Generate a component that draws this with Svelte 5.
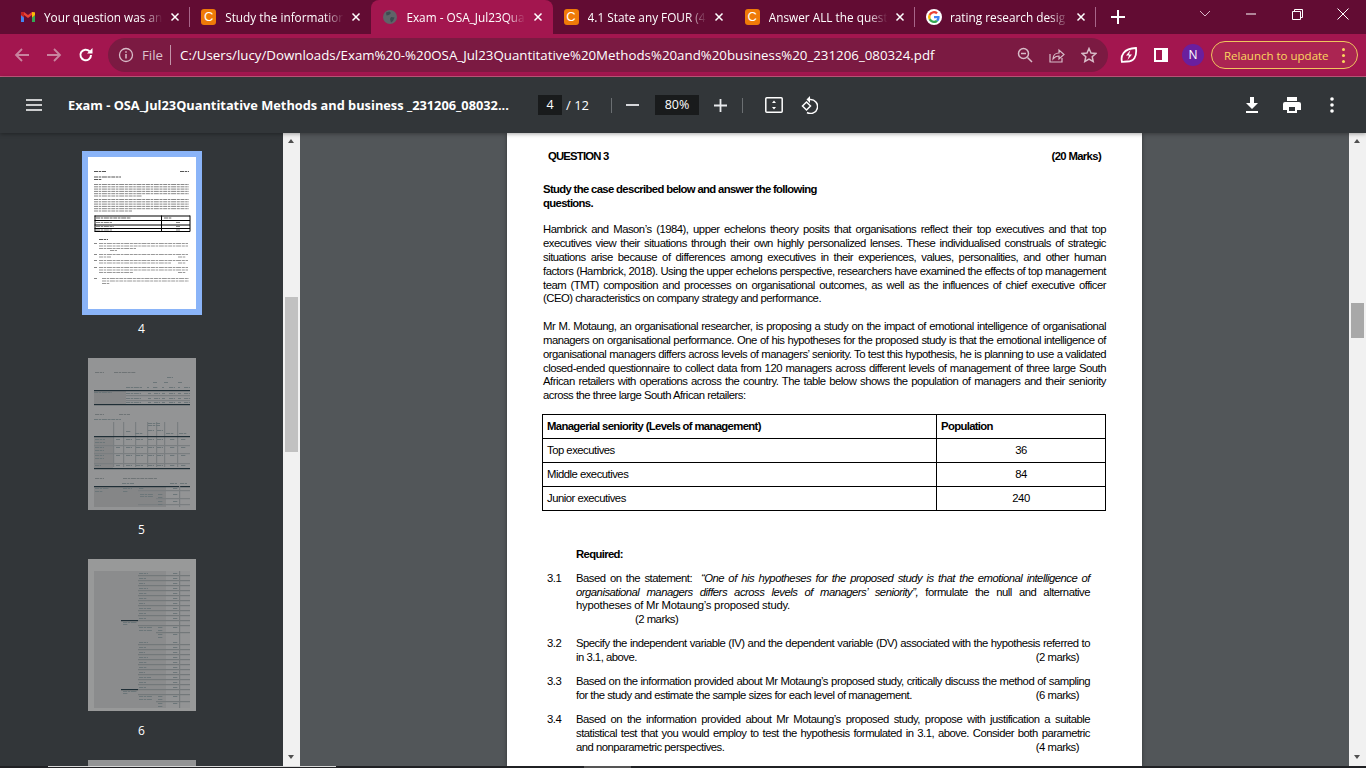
<script>
  const tabs = [
    { t: 'Your question was an', f: 'm' },
    { t: 'Study the information', f: 'c' },
    { t: 'Exam - OSA_Jul23Qua', f: 'g', active: true },
    { t: '4.1 State any FOUR (4', f: 'c' },
    { t: 'Answer ALL the quest', f: 'c' },
    { t: 'rating research desig', f: 'o' }
  ];
  const p1 = [
    'Hambrick and Mason’s (1984), upper echelons theory posits that organisations reflect their top executives and that top',
    'executives view their situations through their own highly personalized lenses. These individualised construals of strategic',
    'situations arise because of differences among executives in their experiences, values, personalities, and other human',
    'factors (Hambrick, 2018). Using the upper echelons perspective, researchers have examined the effects of top management',
    'team (TMT) composition and processes on organisational outcomes, as well as the influences of chief executive officer'
  ];
  const p2 = [
    'Mr M. Motaung, an organisational researcher, is proposing a study on the impact of emotional intelligence of organisational',
    'managers on organisational performance. One of his hypotheses for the proposed study is that the emotional intelligence of',
    'organisational managers differs across levels of managers’ seniority. To test this hypothesis, he is planning to use a validated',
    'closed-ended questionnaire to collect data from 120 managers across different levels of management of three large South',
    'African retailers with operations across the country. The table below shows the population of managers and their seniority'
  ];
  const rows = [['Top executives', '36'], ['Middle executives', '84'], ['Junior executives', '240']];

  // thumbnail marks: [x, y, width, height, colour]; 1px grey marks are drawn as broken "word" lines
  const T = '#555';
  const thumb4 = [
    [6,14,12,1,T],[92,14,9,1,T],[6,19.5,27,1,T],[6,22,8,1,T],
    ...[27,29.3,31.6,33.9,36.2].map(y=>[6,y,95,1,'#888']),[6,38.5,48,1,'#888'],
    ...[42,44.3,46.6,48.9,51.2].map(y=>[6,y,95,1,'#888']),[6,53.5,38,1,'#888'],
    [6.5,58.5,95.5,1,'#000'],[6.5,63,95.5,1,'#000'],[6.5,67.5,95.5,1,'#000'],[6.5,71,95.5,1,'#000'],[6.5,74,95.5,1,'#000'],
    [6.5,58.5,1,16,'#000'],[73,58.5,1,16,'#000'],[101.5,58.5,1,16,'#000'],
    [8,60.5,35,1,'#666'],[76,60.5,8,1,'#666'],[8,65,16,1,'#888'],[8,69,18,1,'#888'],[8,72.5,16,1,'#888'],[88,65,4,1,'#888'],[88,69,4,1,'#888'],[88,72.5,4,1,'#888'],
    [11,82,9,1,T],
    [6,86,3,1,'#888'],[11,86,89,1,'#999'],[11,88.5,89,1,'#999'],[11,91,37,1,'#999'],[22,93,7,1,'#999'],
    [6,97,3,1,'#888'],[11,97,89,1,'#999'],[11,99.5,12,1,'#999'],[90,99.5,8,1,'#999'],
    [6,103,3,1,'#888'],[11,103,89,1,'#999'],[11,105.5,72,1,'#999'],[90,105.5,8,1,'#999'],
    [6,110,3,1,'#888'],[11,110,89,1,'#999'],[11,112.5,89,1,'#999'],[11,115,34,1,'#999'],[90,115,8,1,'#999'],
    [6,121,3,1,'#888'],[14,121,87,1,'#999'],[14,123.5,87,1,'#999'],[14,126,8,1,'#999']
  ];
  const D = '#1f2e36', L = '#6f7476', G = '#6c7679', B = '#7a7e80';
  const thumb5 = [
    [7,14,9,1,L],[26,14,22,1,L],[79,19,6,1,G],[65,24,4,1,G],[76,24,4,1,G],[90,24,4,1,G],
    [38,29,16,1,G],[59,29,2,1,G],[65,29,5,1,G],[74,29,2,1,G],[81,29,6,1,G],[90,29,2,1,G],[96,29,6,1,G],
    [6,33,32,13,'#858687'],[6,32,96,1.2,D],[6,46,96,1.2,D],
    [38,37,64,1.2,B],[38,42,64,1.2,B],[6,34,18,1,G],
    [38,35,15,1,G],[60,35,3,1,G],[66,35,6,1,G],[74,35,3,1,G],[81,35,6,1,G],[90,35,3,1,G],[96,35,6,1,G],
    [38,40,15,1,G],[60,40,3,1,G],[66,40,6,1,G],[74,40,3,1,G],[81,40,6,1,G],[90,40,3,1,G],[96,40,6,1,G],
    [38,44,15,1,G],[60,44,3,1,G],[66,44,6,1,G],[74,44,3,1,G],[81,44,6,1,G],[90,44,3,1,G],[96,44,6,1,G],
    [7,56,9,1,L],[31,56,11,1,L],[6,61,27,1,G],
    ...[25,35,47,59,68,76,89].map(x=>[x,64,1.2,45,B]),
    [6,79,19,31,'#858687'],[6,78,96,1.2,D],[6,110,96,1.2,D],[6,87,96,1.2,B],[6,95,96,1.2,B],[6,105,96,1.2,B],
    [60,65,12,1,G],[60,67,12,1,G],[38,73,5,1,G],[47,75,8,1,G],[60,72,6,1,G],[69,72,6,1,G],[78,75,8,1,G],[91,75,8,1,G],
    [7,81,10,1,G],[7,84,10,1,G],[28,81,4,1,G],[38,81,6,1,G],[48,81,7,1,G],[60,81,6,1,G],[69,81,6,1,G],[82,81,5,1,G],[93,81,5,1,G],
    [7,89,9,1,G],[7,92,9,1,G],[28,89,4,1,G],[38,89,6,1,G],[48,89,7,1,G],[60,89,6,1,G],[69,89,6,1,G],[82,89,5,1,G],[93,89,5,1,G],
    [7,97,9,1,G],[7,100,9,1,G],[28,97,4,1,G],[38,97,6,1,G],[48,97,7,1,G],[60,97,6,1,G],[69,97,6,1,G],[82,97,5,1,G],[93,97,5,1,G],
    [7,107,6,1,G],[28,107,4,1,G],[38,107,6,1,G],[48,107,7,1,G],[60,107,6,1,G],[69,107,6,1,G],[82,107,5,1,G],[93,107,5,1,G],
    [7,120,9,1,L],[35,120,34,1,L],[34,125,12,1,G],[82,125,7,1,G],[92,125,7,1,G],
    [6,129,72,20,'#858687'],[6,128,96,1.2,D],[7,130,14,1,G],[7,133,8,1,G],[35,130,9,1,G],[35,133,5,1,G],[51,130,5,1,G],[85,130,5,1,G],
    [50,132,52,1.2,B],[50,146,52,1.2,B],[68,140,34,1.2,B],[52,136,13,1,G],[52,138,13,1,G],[70,136,5,1,G],[70,139,5,1,G],[70,143,5,1,G],[70,146,5,1,G],[85,136,5,1,G],[85,143,5,1,G],
    [91,128,1.2,21,B]
  ];
  const rowsY = [16,21,26,31,36,41,46,51,56,61];
  const lab = [9,7,6,9,8,8,6,12,7,7];
  const thumb6 = [
    [0,0,108,152,'#989999'],[6,12,72,137,'#8b8c8d'],[78,12,24,137,'#939495'],
    ...[0,69].flatMap(o => rowsY.map((y)=>[50,y+o,52,1.2,'#73787a'])),
    ...[0,69].flatMap(o => rowsY.map((y,i)=>[51,y+o-2,lab[i],1,G])),
    ...[0,69].flatMap(o => rowsY.map((y)=>[85,y+o-2,5,1,G])),
    [91,12,1.2,137,'#787c7e'],
    [33,61,17,1.2,D],[33,130,17,1.2,D],[35,63,14,1,G],[35,65,5,1,G],[35,132,14,1,G],[35,134,5,1,G],
    [50,66,52,1.2,'#73787a'],[68,73,34,1.2,'#73787a'],[50,135,52,1.2,'#73787a'],[68,142,34,1.2,'#73787a'],
    [51,68,13,1,G],[51,71,13,1,G],[70,68,5,1,G],[70,71,5,1,G],[70,75,5,1,G],[70,78,5,1,G],[85,68,5,1,G],[85,75,5,1,G],
    [51,137,13,1,G],[51,140,13,1,G],[70,137,5,1,G],[70,140,5,1,G],[70,144,5,1,G],[70,147,5,1,G],[85,137,5,1,G],[85,144,5,1,G]
  ];
  const thumbs = [
    { n: 4, marks: thumb4, sel: true },
    { n: 5, marks: thumb5 },
    { n: 6, marks: thumb6 },
    { marks: [] }
  ];
  const isWord = (m) => m[3] === 1 && m[4] !== '#000';
</script>

<div class="app">
  <div class="tabstrip">
    {#each tabs as tab}
      <div class="tab" class:active={tab.active}>
        <span class="fav">
          {#if tab.f === 'm'}
            <svg viewBox="0 0 16 16" width="16" height="16"><path d="M1 4v9h3V7z" fill="#4285f4"/><path d="M15 4v9h-3V7z" fill="#34a853"/><path d="M1 3.5 4 3l4 3 4-3 3 .5V6l-3 2.5V6L8 9 4 6v2.5L1 6z" fill="#ea4335"/><path d="M12 3l3 .5V6l-3 2.5z" fill="#fbbc04"/><path d="M1 3.5 4 3v5.5L1 6z" fill="#c5221f"/></svg>
          {:else if tab.f === 'c'}
            <span class="chegg">C</span>
          {:else if tab.f === 'g'}
            <svg viewBox="0 0 16 16" width="16" height="16"><circle cx="8" cy="8" r="7" fill="#5f6368"/><path d="M4 3.5 7.5 2.5 9 4 7 6 4.5 6.5zM9 8l3.5.5L11 12l-2 1.5L8 10z" fill="#3c4a50"/></svg>
          {:else}
            <svg viewBox="0 0 16 16" width="16" height="16"><circle cx="8" cy="8" r="8" fill="#fff"/><path d="M13.6 8.2c0-.4 0-.8-.1-1.2H8v2.3h3.2c-.1.7-.6 1.4-1.2 1.8l1.9 1.4c1.1-1 1.7-2.5 1.7-4.3z" fill="#4285f4"/><path d="M8 14c1.6 0 2.9-.5 3.9-1.5L10 11.1c-.5.4-1.2.6-2 .6-1.5 0-2.9-1-3.3-2.4l-2 1.5C3.700 12.700 5.700 14 8 14z" fill="#34a853"/><path d="M4.700 9.300a3.700 3.700 0 0 1 0-2.600l-2-1.500a6 6 0 0 0 0 5.600z" fill="#fbbc04"/><path d="M8 4.300c.9 0 1.600.3 2.200.9l1.700-1.700A6 6 0 0 0 2.700 5.200l2 1.500C5.100 5.300 6.500 4.300 8 4.300z" fill="#ea4335"/></svg>
          {/if}
        </span>
        <span class="ttl">{tab.t}</span>
        <svg class="cls" viewBox="0 0 10 10" width="10" height="10"><path d="M1.500 1.500l7 7M8.500 1.500l-7 7" stroke="#fff" stroke-width="1.500"/></svg>
      </div>
    {/each}
    <svg class="plus" viewBox="0 0 14 14" width="14" height="14"><path d="M7 0v14M0 7h14" stroke="#fff" stroke-width="2"/></svg>
    <div class="winctl">
      <span><svg viewBox="0 0 12 8" width="12" height="8"><path d="M1 1l5 5 5-5" fill="none" stroke="#d9b8c8" stroke-width="1"/></svg></span>
      <span><svg viewBox="0 0 10 2" width="10" height="2"><path d="M0 1h10" stroke="#fff" stroke-width="1"/></svg></span>
      <span><svg viewBox="0 0 11 11" width="11" height="11"><path d="M.5 2.500h8v8h-8zM2.500 2.500v-2h8v8h-2" fill="none" stroke="#fff" stroke-width="1"/></svg></span>
      <span><svg viewBox="0 0 12 12" width="12" height="12"><path d="M.5.500l11 11M11.500.500l-11 11" stroke="#fff" stroke-width="1"/></svg></span>
    </div>
  </div>

  <div class="toolbar">
    <span class="btn"><svg viewBox="0 0 16 16" width="16" height="16"><path d="M15 8H2M8 2 2 8l6 6" fill="none" stroke="#c9849f" stroke-width="1.800"/></svg></span>
    <span class="btn"><svg viewBox="0 0 16 16" width="16" height="16"><path d="M1 8h13M8 2l6 6-6 6" fill="none" stroke="#c9849f" stroke-width="1.800"/></svg></span>
    <span class="btn"><svg viewBox="0 0 16 16" width="16" height="16"><path d="M13 8a5.300 5.300 0 1 1-1.500-3.700" fill="none" stroke="#fff" stroke-width="2"/><path d="M14.500 1v5.500H9z" fill="#fff"/></svg></span>
    <div class="omni">
      <svg class="info" viewBox="0 0 16 16" width="16" height="16"><circle cx="8" cy="8" r="6.500" fill="none" stroke="#d8bcc8" stroke-width="1.300"/><path d="M8 7v4.500M8 4.300v1.500" stroke="#d8bcc8" stroke-width="1.500"/></svg>
      <span class="file">File</span>
      <span class="osep"></span>
      <span class="url">C:/Users/lucy/Downloads/Exam%20-%20OSA_Jul23Quantitative%20Methods%20and%20business%20_231206_080324.pdf</span>
      <span class="btn"><svg viewBox="0 0 16 16" width="16" height="16"><circle cx="6.500" cy="6.500" r="5" fill="none" stroke="#d8bcc8" stroke-width="1.500"/><path d="M10.500 10.500 15 15M4 6.500h5" stroke="#d8bcc8" stroke-width="1.500"/></svg></span>
      <span class="btn"><svg viewBox="0 0 16 16" width="16" height="16"><path d="M1 7v8h12v-4" fill="none" stroke="#d8bcc8" stroke-width="1.200"/><path d="M4 12c0-4 3-6 6-6V3l5 4.500-5 4.500V9c-2.500 0-4.500 1-6 3z" fill="none" stroke="#d8bcc8" stroke-width="1.200"/></svg></span>
      <span class="btn"><svg viewBox="0 0 16 16" width="16" height="16"><path d="M8 1.500l2 4.500 4.800.5-3.600 3.200 1 4.800L8 12l-4.200 2.500 1-4.800L1.200 6.500 6 6z" fill="none" stroke="#d8bcc8" stroke-width="1.500"/></svg></span>
    </div>
    <span class="btn leaf"><svg viewBox="0 0 18 18" width="18" height="18"><path d="M2 16c-1.500-6 1-13.500 14-14 1 8.500-2 13.500-9 13.500-2 0-3 0-5 .5z" fill="none" stroke="#fff" stroke-width="1.800"/><path d="M10.500 4 6 9.500h3L7.500 14 12 8.500H9z" fill="#fff"/></svg></span>
    <span class="btn"><span class="panel"><span></span></span></span>
    <span class="btn"><span class="avatar">N</span></span>
    <div class="relaunch"><span>Relaunch to update</span><i></i></div>
  </div>

  <div class="pdfbar">
    <svg class="ham" viewBox="0 0 16 12" width="16" height="12"><path d="M0 1h16M0 6h16M0 11h16" stroke="#fff" stroke-width="1.700"/></svg>
    <span class="doc">Exam - OSA_Jul23Quantitative Methods and business _231206_08032...</span>
    <span class="pbox">4</span>
    <span class="pcount">/ 12</span>
    <span class="psep s1"></span>
    <svg class="minus" viewBox="0 0 13 2" width="13" height="2"><path d="M0 1h13" stroke="#e8eaed" stroke-width="1.800"/></svg>
    <span class="zbox">80%</span>
    <svg class="zplus" viewBox="0 0 13 13" width="13" height="13"><path d="M6.500 0v13M0 6.500h13" stroke="#e8eaed" stroke-width="1.800"/></svg>
    <span class="psep s2"></span>
    <svg class="fit" viewBox="0 0 18 16" width="18" height="16"><rect x=".8" y=".8" width="16.400" height="14.400" rx="1" fill="none" stroke="#fff" stroke-width="1.500"/><path d="M9 3.500l2 2.500H7zM9 12.500 7 10h4z" fill="#fff"/></svg>
    <svg class="rot" viewBox="0 0 18 18" width="18" height="18"><path d="M10 3.500a7 7 0 1 1-3 13" fill="none" stroke="#fff" stroke-width="1.500"/><path d="M10 0v7L6.500 3.500z" fill="#fff"/><path d="M6.500 6l4 4-4 4-4-4z" fill="none" stroke="#fff" stroke-width="1.500"/></svg>
    <span class="pright">
      <span class="pb"><svg viewBox="0 0 14 16" width="14" height="16"><path d="M5 0h4v6h4L7 12 1 6h4zM1 14h12v2H1z" fill="#fff"/></svg></span>
      <span class="pb"><svg viewBox="0 0 18 16" width="18" height="16"><path d="M4 0h10v4H4zM2 5h14a2 2 0 0 1 2 2v6h-4v3H4v-3H0V7a2 2 0 0 1 2-2zM6 10v4h6v-4z" fill="#fff"/></svg></span>
      <span class="pb"><svg viewBox="0 0 4 16" width="4" height="16"><circle cx="2" cy="2" r="1.800" fill="#fff"/><circle cx="2" cy="8" r="1.800" fill="#fff"/><circle cx="2" cy="14" r="1.800" fill="#fff"/></svg></span>
    </span>
  </div>

  <div class="main">
    <aside class="side">
      {#each thumbs as th}
        <div class="titem">
          <div class="thumb" class:sel={th.sel}>
            <svg viewBox="0 0 108 152" width="108" height="152">
              {#each th.marks as m}
                {#if isWord(m)}
                  <line x1={m[0]} x2={m[0] + m[2]} y1={m[1] + .5} y2={m[1] + .5} stroke={m[4]} stroke-width="1" stroke-dasharray="4 .7 2.500 .7 5 .7 3 .7" />
                {:else}
                  <rect x={m[0]} y={m[1]} width={m[2]} height={m[3]} fill={m[4]} />
                {/if}
              {/each}
            </svg>
          </div>
          {#if th.n}<div class="tnum">{th.n}</div>{/if}
        </div>
      {/each}
    </aside>
    <div class="sb left"><i class="up"></i><b></b><i class="down"></i></div>
    <div class="viewer">
      <div class="page">
        <div class="qhead"><span class="q">QUESTION 3</span><span>(20 Marks)</span></div>
        <div class="study"><div>Study the case described below and answer the following</div><div>questions.</div></div>
        <div class="para">
          {#each p1 as l}<div class="j">{l}</div>{/each}
          <div>(CEO) characteristics on company strategy and performance.</div>
        </div>
        <div class="para p2">
          {#each p2 as l}<div class="j">{l}</div>{/each}
          <div>across the three large South African retailers:</div>
        </div>
        <table>
          <tbody>
            <tr class="hd"><td>Managerial seniority (Levels of management)</td><td>Population</td></tr>
            {#each rows as r}<tr><td>{r[0]}</td><td class="c">{r[1]}</td></tr>{/each}
          </tbody>
        </table>
        <div class="req">Required:</div>
        <div class="item i1">
          <span class="n">3.1</span>
          <div class="ls">
            <div class="j">Based on the statement:&nbsp; <em>“One of his hypotheses for the proposed study is that the emotional intelligence of</em></div>
            <div class="j"><em>organisational managers differs across levels of managers’ seniority”,</em> formulate the null and alternative</div>
            <div class="wide">hypotheses of Mr Motaung’s proposed study.</div>
            <div class="m2">(2 marks)</div>
          </div>
        </div>
        <div class="item">
          <span class="n">3.2</span>
          <div class="ls">
            <div class="j">Specify the independent variable (IV) and the dependent variable (DV) associated with the hypothesis referred to</div>
            <div class="mk"><span>in 3.1, above.</span><span>(2 marks)</span></div>
          </div>
        </div>
        <div class="item">
          <span class="n">3.3</span>
          <div class="ls">
            <div class="j">Based on the information provided about Mr Motaung’s proposed study, critically discuss the method of sampling</div>
            <div class="mk"><span>for the study and estimate the sample sizes for each level of management.</span><span>(6 marks)</span></div>
          </div>
        </div>
        <div class="item">
          <span class="n">3.4</span>
          <div class="ls">
            <div class="j">Based on the information provided about Mr Motaung’s proposed study, propose with justification a suitable</div>
            <div class="j">statistical test that you would employ to test the hypothesis formulated in 3.1, above. Consider both parametric</div>
            <div class="mk"><span>and nonparametric perspectives.</span><span>(4 marks)</span></div>
          </div>
        </div>
      </div>
    </div>
    <div class="sb right"><i class="up"></i><b></b><i class="down"></i></div>
  </div>
  <div class="bottom"><span class="seg1"></span><span class="seg2"></span></div>
</div>

<style>
  :global(body) { margin: 0; background: #323639; }
  .app { width: 1366px; height: 768px; display: flex; flex-direction: column; overflow: hidden; font-family: "Open Sans", "Noto Sans", sans-serif; color: #fff; }

  .tabstrip { height: 34px; flex: none; background: #620c33; display: flex; align-items: stretch; padding-left: 9px; }
  .tab { width: 181.2px; box-sizing: border-box; display: flex; align-items: center; padding-left: 11px; padding-right: 10px; position: relative; font-size: 11.800px; }
  .tab::after { content: ""; position: absolute; right: 0; top: 7px; height: 20px; width: 1px; background: #a8668a; }
  .tab:nth-child(2)::after, .tab:nth-child(3)::after, .tab:nth-child(4)::after { display: none; }
  .tab.active { background: #a3164f; border-radius: 8px 8px 0 0; }
  .fav { width: 16px; height: 16px; flex: none; display: flex; }
  .chegg { width: 15px; height: 16px; border-radius: 3px; background: #ef7a08; color: #fff; font: 13px/16px "Liberation Sans", sans-serif; text-align: center; }
  .ttl { flex: 1; min-width: 0; margin-left: 8px; white-space: nowrap; overflow: hidden; -webkit-mask-image: linear-gradient(90deg, #000 82%, transparent 98%); mask-image: linear-gradient(90deg, #000 82%, transparent 98%); }
  .cls { flex: none; margin-left: 5px; }
  .plus { align-self: center; margin-left: 15px; }
  .winctl { margin-left: auto; display: flex; align-items: center; margin-top: -6px; }
  .winctl span { width: 46px; display: flex; justify-content: center; }

  .toolbar { height: 42px; flex: none; background: #a3164f; border-bottom: 1px solid #c85a80; display: flex; align-items: center; padding-left: 6px; }
  .btn { width: 32px; height: 32px; flex: none; display: flex; align-items: center; justify-content: center; }
  .omni { width: 1000px; height: 34px; box-sizing: border-box; margin-left: 6px; background: #7b1a42; border-radius: 17px; display: flex; align-items: center; padding: 0 3px 0 10px; font-size: 13.300px; }
  .file { margin-left: 8px; color: #dcc3ce; }
  .osep { width: 1px; height: 20px; background: #c295a9; margin: 0 9px 0 7px; }
  .url { flex: 1; white-space: nowrap; overflow: hidden; }
  .leaf { margin-left: 5px; }
  .panel { width: 14px; height: 14px; background: #fff; display: flex; justify-content: flex-start; box-sizing: border-box; padding: 2px; }
  .panel span { width: 6px; background: #a3164f; }
  .avatar { width: 22px; height: 22px; border-radius: 50%; background: #6a1f9e; font-size: 12px; line-height: 22px; text-align: center; }
  .relaunch { margin-left: 2px; width: 147px; height: 28px; box-sizing: border-box; border: 1px solid #f0c75e; border-radius: 14px; background: #ab2552; color: #fbd75f; font-size: 11.500px; display: flex; align-items: center; padding-left: 12px; position: relative; white-space: nowrap; }
  .relaunch i { position: absolute; right: 12px; top: 6px; width: 3px; height: 3px; border-radius: 50%; background: #fbd75f; box-shadow: 0 6px 0 #fbd75f, 0 12px 0 #fbd75f; }

  .pdfbar { height: 56px; flex: none; background: #323639; display: flex; align-items: center; position: relative; z-index: 2; box-shadow: 0 1px 4px rgba(0,0,0,.35); font-size: 12.800px; }
  .ham { margin-left: 26px; }
  .doc { margin-left: 26px; width: 445px; white-space: nowrap; font-weight: 700; }
  .pbox, .zbox { background: #191b1c; height: 20px; line-height: 20px; text-align: center; font-size: 12.500px; }
  .pbox { margin-left: 25px; width: 24px; }
  .pcount { margin-left: 4px; width: 45px; font-size: 13px; }
  .psep { width: 1px; height: 15px; background: #6b6f72; }
  .minus { margin-left: 14px; }
  .zbox { margin-left: 16px; width: 44px; }
  .zplus { margin-left: 15px; }
  .s2 { margin-left: 15px; }
  .fit { margin-left: 22px; }
  .rot { margin-left: 17px; }
  .pright { margin-left: auto; padding-right: 14px; display: flex; }
  .pb { width: 40px; height: 40px; display: flex; align-items: center; justify-content: center; }

  .main { flex: 1; min-height: 0; display: flex; overflow: hidden; }
  .side { width: 283px; flex: none; background: #323639; overflow: hidden; padding-top: 24px; box-sizing: border-box; }
  .titem { height: 201px; }
  .thumb { width: 108px; height: 152px; margin: 0 auto; background: #939495; }
  .thumb svg { display: block; filter: blur(.4px); }
  .thumb.sel { background: #fff; box-shadow: 0 0 0 6px #8ab4f8; }
  .tnum { text-align: center; font-size: 12px; line-height: 40px; }
  .sb { width: 17px; flex: none; background: #f1f1f1; position: relative; }
  .sb b { position: absolute; left: 2px; width: 13px; }
  .sb.left b { top: 164px; height: 155px; background: #c1c1c1; }
  .sb.right b { top: 170px; height: 35px; background: #a8a8a8; }
  .sb i { position: absolute; left: 5px; width: 0; height: 0; border-left: 3.500px solid transparent; border-right: 3.500px solid transparent; }
  .sb .up { top: 6px; border-bottom: 4px solid #505050; }
  .sb .down { bottom: 7px; border-top: 4px solid #505050; }

  .viewer { flex: 1; min-width: 0; background: #525659; display: flex; justify-content: center; overflow: hidden; }
  .page { width: 635px; height: 633px; flex: none; box-sizing: border-box; background: #fff; box-shadow: 0 0 4px rgba(0,0,0,.4); color: #000; font-family: "Liberation Sans", Arial, sans-serif; font-size: 11.300px; line-height: 13.800px; letter-spacing: -.5px; overflow: hidden; padding-top: 16px; }
  .qhead { display: flex; justify-content: space-between; font-weight: bold; letter-spacing: -.65px; padding: 1px 41px 0; }
  .q { letter-spacing: -.8px; }
  .study { font-weight: bold; letter-spacing: -.65px; margin: 19px 0 0 36px; }
  .para { margin: 13px 0 0 36px; width: 563px; }
  .p2 { margin-top: 14px; }
  .j { text-align: justify; text-align-last: justify; white-space: nowrap; }
  .wide { letter-spacing: -.25px; }
  table { border-collapse: collapse; margin: 11px 0 0 35px; width: 564px; table-layout: fixed; }
  td { border: 1px solid #000; height: 24px; padding: 0 4px; box-sizing: border-box; }
  td:first-child { width: 394px; }
  tr.hd td { font-weight: bold; letter-spacing: -.65px; }
  td.c { text-align: center; }
  .req { font-weight: bold; letter-spacing: -.65px; margin: 37px 0 0 69px; }
  .item { display: flex; margin: 10.400px 0 0 40px; width: 543px; }
  .i1 { margin-top: 10px; }
  .n { width: 29px; flex: none; }
  .ls { width: 514px; }
  .m2 { padding-left: 59px; }
  .mk { display: flex; justify-content: space-between; padding-right: 11px; white-space: nowrap; }

  .bottom { height: 2px; flex: none; background: #202124; display: flex; align-items: flex-start; }
  .seg1 { margin-left: 48px; width: 288px; height: 1px; background: #d8d8d8; }
  .seg2 { margin-left: 248px; width: 47px; height: 2px; background: #555; }
</style>
